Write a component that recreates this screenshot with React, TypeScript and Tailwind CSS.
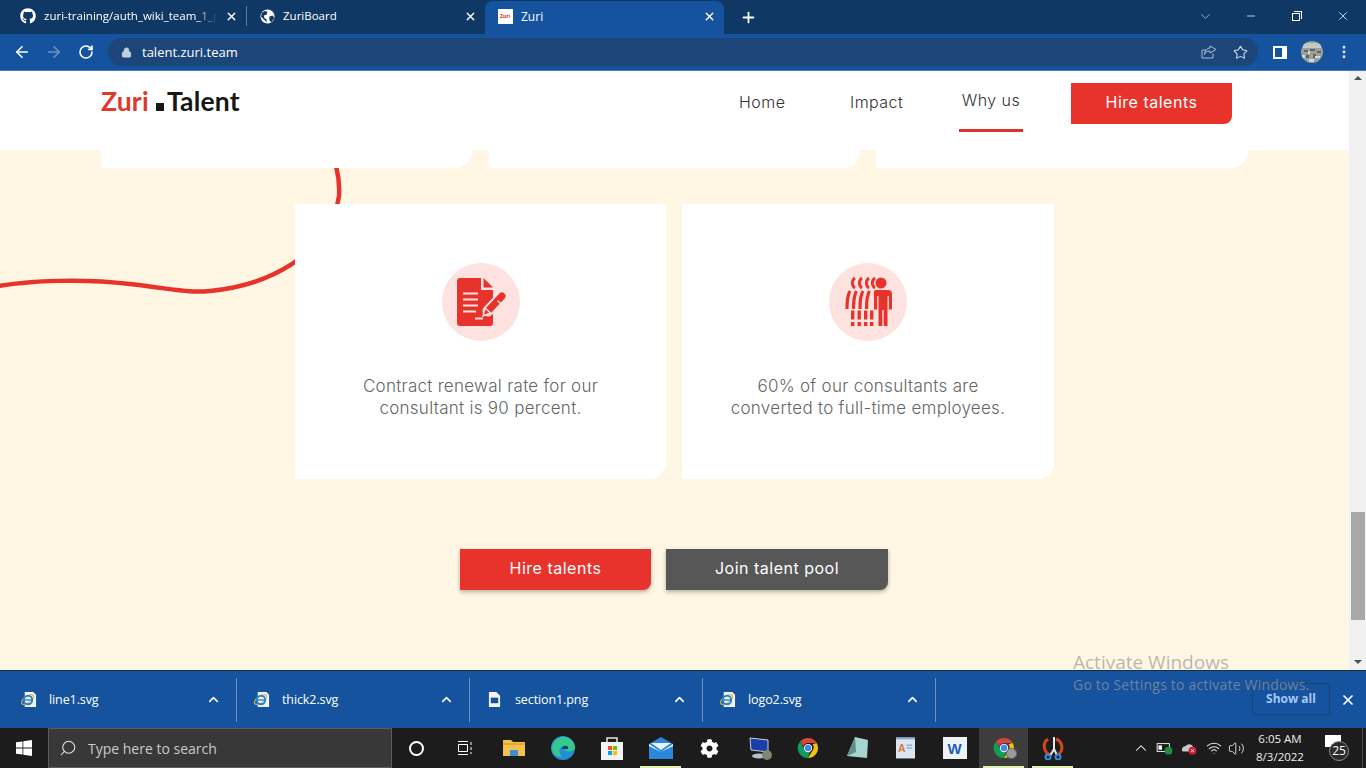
import { FaGithub, FaCog } from 'react-icons/fa'
import { ArrowLeft, ArrowRight, RotateCw, Lock, Star, X, Plus, ChevronDown, ChevronUp, Minus, Search, Wifi, Volume2, MoreVertical } from 'lucide-react'

const ui = "font-['Open_Sans',sans-serif]"
const page = "font-['Inter',sans-serif]"

function Globe() {
  return (
    <svg viewBox="0 0 16 16" className="w-[15px] h-[15px]">
      <circle cx="8" cy="8" r="7.5" fill="#fff" />
      <path d="M2 4l3-2 3 1-1 3-3 1 1 3 2 1v3L4 11 1 8zM10 8l4-1 1 3-3 4-2-2z" fill="#0f3864" />
    </svg>
  )
}

function ChromeLogo({ size = 22 }: { size?: number }) {
  return (
    <svg viewBox="0 0 24 24" width={size} height={size}>
      <path d="M12 1a11 11 0 0 1 9.5 5.5H12a5.5 5.5 0 0 0-5 3.2L3.4 4.9A11 11 0 0 1 12 1z" fill="#db4437" />
      <path d="M21.5 6.500A11 11 0 0 1 12 23l4.700-8.100A5.500 5.500 0 0 0 17 8z" fill="#f4c20d" />
      <path d="M12 23A11 11 0 0 1 3.400 4.900l4.600 8a5.500 5.500 0 0 0 6 3.500z" fill="#0f9d58" />
      <circle cx="12" cy="12" r="4.500" fill="#fff" />
      <circle cx="12" cy="12" r="3.500" fill="#4285f4" />
    </svg>
  )
}

function Tab({ icon, label, active, fade, width }: { icon: React.ReactNode; label: string; active?: boolean; fade?: boolean; width: string }) {
  return (
    <div className={`relative flex items-center pl-3 pr-[8px] gap-2 shrink-0 ${width} ${active ? 'bg-[#15539e] rounded-t-lg h-[33px] self-end pb-[2px]' : 'h-[30px] mb-[2px]'}`}>
      <span className="w-[16px] flex justify-center shrink-0">{icon}</span>
      <span className={`flex-1 overflow-hidden whitespace-nowrap text-white ${active ? 'text-[12px]' : 'text-[11.5px]'} ${ui} ${fade ? '[mask-image:linear-gradient(to_right,black_88%,transparent)]' : ''}`}>{label}</span>
      <X className="w-[13px] h-[13px] text-white shrink-0" strokeWidth={2.5} />
    </div>
  )
}

function Avatar() {
  return (
    <svg viewBox="0 0 22 22" className="w-[22px] h-[22px]">
      <defs>
        <clipPath id="avatar-clip"><circle cx="11" cy="11" r="11" /></clipPath>
      </defs>
      <g clipPath="url(#avatar-clip)">
        <rect width="22" height="22" fill="#9aa09b" />
        <rect x="2" y="2" width="18" height="5" fill="#c4c8c3" />
        <path d="M3 9h4v2H3zM9 8h5v2H9zM16 10h4v2h-4zM5 14h3v3H5zM12 13h3v4h-3z" fill="#5f6663" />
        <path d="M7 10h2v3H7zM14 15h5v2h-5zM1 14h3v3H1zM8 18h5v3H8z" fill="#d6d9d4" />
      </g>
    </svg>
  )
}

function BrowserChrome() {
  return (
    <div className="shrink-0">
      <div className="h-[34px] bg-[#0f3864] flex items-end pl-[8px] relative">
        <div className="flex items-center h-[34px]">
          <Tab width="w-[238px]" icon={<FaGithub className="text-white w-4 h-4" />} label="zuri-training/auth_wiki_team_1_project" fade />
          <div className="w-px h-5 bg-[#5a7ba5] shrink-0 mb-[2px]" />
          <Tab width="w-[238px]" icon={<Globe />} label="ZuriBoard" />
          <Tab
            active
            width="w-[239px]"
            icon={<span className="w-[15px] h-[15px] bg-white flex items-center justify-center text-[5px] font-bold text-[#c33]">Zuri</span>}
            label="Zuri"
          />
        </div>
        <Plus className="w-[17px] h-[17px] text-white ml-[16px] mb-2" strokeWidth={2.5} />
        <div className="flex-1" />
        <div className="flex items-center h-[32px] self-start">
          <span className="w-[46px] flex justify-center"><ChevronDown className="w-[15px] h-[15px] text-[#c8d4e4]" strokeWidth={1.2} /></span>
          <span className="w-[46px] flex justify-center"><Minus className="w-[12px] h-[12px] text-white" strokeWidth={1.5} /></span>
          <span className="w-[46px] flex justify-center">
            <span className="relative block w-[10px] h-[10px]">
              <span className="absolute left-0 bottom-0 w-[8px] h-[8px] border border-white bg-[#0f3864]" />
              <span className="absolute right-0 top-0 w-[8px] h-[8px] border-t border-r border-white" />
            </span>
          </span>
          <span className="w-[46px] flex justify-center"><X className="w-[14px] h-[14px] text-white" strokeWidth={1.3} /></span>
        </div>
      </div>
      <div className="h-[37px] bg-[#15539e] flex items-center pl-[13px] border-b border-[#4a7ab5]">
        <ArrowLeft className="w-[18px] h-[18px] text-white" strokeWidth={2.2} />
        <ArrowRight className="w-[18px] h-[18px] text-[#6e94c5] ml-[14px]" strokeWidth={2.2} />
        <RotateCw className="w-[16px] h-[16px] text-white ml-[15px]" strokeWidth={2.4} />
        <div className="ml-[14px] w-[1150px] h-[28px] rounded-full bg-[#1c4679] flex items-center pl-[13px] pr-[10px]">
          <Lock className="w-[11px] h-[11px] text-[#c2cedd]" fill="#c2cedd" />
          <span className={`ml-[10px] mt-[1px] text-[13px] text-white ${ui}`}>talent.zuri.team</span>
          <div className="flex-1" />
          <svg viewBox="0 0 16 16" className="w-[16px] h-[16px] mr-[16px]" fill="none" stroke="#a9bcd4" strokeWidth="1">
            <path d="M12 9.500V14H1V6h4M9 2l6 3.500L9 9V7C6 7 4.500 8 3.500 10.500 3.500 7 6 4 9 4z" />
          </svg>
          <Star className="w-[15px] h-[15px] text-[#d5deea]" strokeWidth={1.7} />
        </div>
        <div className="ml-[15px] w-[14px] h-[13px] bg-white flex items-center pl-[2px]"><span className="block w-[7px] h-[9px] bg-[#15539e]" /></div>
        <div className="ml-[14px]"><Avatar /></div>
        <MoreVertical className="ml-[13px] w-[16px] h-[16px] text-[#dfe6f0]" strokeWidth={2.4} />
      </div>
    </div>
  )
}

// both feature icons are drawn in the 78px space of the pink circle
function FormIcon() {
  return (
    <svg viewBox="0 0 78 78" className="w-[78px] h-[78px]">
      <path d="M15 18a3 3 0 0 1 3-3h21v12h12v33a3 3 0 0 1-3 3H18a3 3 0 0 1-3-3z" fill="#e7332b" />
      <path d="M41.500 15L51 24.500h-9.500z" fill="#e7332b" />
      <path d="M21 30.500h15M21 36.500h15M21 42.500h15M21 48.500h13M33 55.500h8" stroke="#fde2e0" strokeWidth="2" />
      <path d="M46 48L60 33" stroke="#fde2e0" strokeWidth="11" strokeLinecap="round" />
      <path d="M46 48L60 33" stroke="#e7332b" strokeWidth="7" strokeLinecap="round" />
      <path d="M41 53l2-8 5.500 5z" fill="#e7332b" stroke="#fde2e0" strokeWidth="1.500" />
      <path d="M55.500 37.500l4 4" stroke="#fde2e0" strokeWidth="1.500" />
    </svg>
  )
}

function PeopleIcon() {
  const heads = [24, 31, 38, 44]
  const arcs = [17, 23.5, 30, 36.5]
  const legs = [23.5, 30, 36.5, 42.5]
  return (
    <svg viewBox="0 0 78 78" className="w-[78px] h-[78px]">
      {heads.map((x) => (
        <path key={x} d={`M${x + 2} 15a6 6 0 0 0 0 10`} fill="none" stroke="#e7332b" strokeWidth="2.800" />
      ))}
      {arcs.map((x) => (
        <path key={x} d={`M${x + 4} 28c-2.500 4-3 10-3 18`} fill="none" stroke="#e7332b" strokeWidth="3.200" />
      ))}
      {legs.map((x) => (
        <g key={x} fill="#e7332b">
          <rect x={x - 1.500} y="47.500" width="3.400" height="9" />
          <rect x={x - 1.500} y="59" width="3.400" height="4" />
        </g>
      ))}
      <circle cx="52" cy="20" r="5.500" fill="#e7332b" />
      <path d="M46 27h13a4 4 0 0 1 4 4v15.500h-3.200V33h-1.300v30h-3.800V47h-1.400v16h-3.800V33h-1.300v13.500H45V31a4 4 0 0 1 1-4z" fill="#e7332b" />
    </svg>
  )
}

function InfoCard({ icon, children }: { icon: React.ReactNode; children: React.ReactNode }) {
  return (
    <div className="relative bg-white h-[275px] rounded-br-[16px] pt-[59px] flex flex-col items-center">
      <div className="w-[78px] h-[78px] rounded-full bg-[#fde2e0]">{icon}</div>
      <p className={`mt-[34px] text-center text-[17px] leading-[22px] tracking-[0.28px] font-light text-[#666666] ${page}`}>{children}</p>
    </div>
  )
}

function ZuriPage() {
  return (
    <div className="relative flex-1 bg-[#fff7e4] overflow-hidden flex flex-col">
      <header className="h-[79px] bg-white shrink-0 flex items-start pl-[101px] relative z-10">
        <div className="mt-[14px] w-[139px] flex items-baseline font-['Lato',sans-serif] text-[26.5px] leading-[32px] font-bold tracking-[0.2px] text-[#171717]">
          <span className="text-[#df3a30]">Zuri</span>
          <span className="inline-block w-[8px] h-[8px] bg-[#171717] ml-[7px] mr-[3px]" />
          <span>Talent</span>
        </div>
        <nav className={`ml-[499px] flex items-start text-[#333333] text-[16px] font-light tracking-[0.45px] ${page}`}>
          <a className="mt-[22px] w-[45px] leading-[18px]">Home</a>
          <a className="mt-[22px] ml-[66px] w-[53px] leading-[18px]">Impact</a>
          <a className="ml-[56px] w-[64px] h-[61px] pt-[20px] leading-[18px] text-center border-b-[3px] border-[#d9342b]">Why us</a>
          <button className="ml-[48px] mt-[12px] w-[161px] h-[41px] pb-[3px] bg-[#e7332b] rounded-br-lg font-normal text-white text-[16px] tracking-[0.5px]">Hire talents</button>
        </nav>
      </header>

      <svg viewBox="0 0 345 140" className="absolute left-0 top-[95px] w-[345px] h-[140px]" fill="none">
        <path d="M-2 120C30 115 80 112 130 118S190 127 210 125C265 120 330 90 339 30 340 15 338 8 336 0" stroke="#e7332b" strokeWidth="4.500" />
      </svg>

      <div className="relative grid grid-cols-[371px_371px_372px] gap-[16.5px] w-[1147px] mx-auto">
        {[0, 1, 2].map((i) => (
          <div key={i} className="h-[18px] bg-white rounded-br-[16px]" />
        ))}
      </div>

      <div className="relative grid grid-cols-[371px_372px] gap-4 w-[759px] mx-auto mt-[36px]">
        <InfoCard icon={<FormIcon />}>
          Contract renewal rate for our
          <br />
          consultant is 90 percent.
        </InfoCard>
        <InfoCard icon={<PeopleIcon />}>
          60% of our consultants are
          <br />
          converted to full-time employees.
        </InfoCard>
      </div>

      <div className={`relative flex justify-center gap-[15px] mt-[70px] pr-[1px] text-white text-[16px] tracking-[0.5px] ${page}`}>
        <button className="w-[191px] h-[41px] pb-[3px] bg-[#e7332b] rounded-br-lg shadow-[0_2px_4px_rgba(0,0,0,0.3)]">Hire talents</button>
        <button className="w-[222px] h-[41px] pb-[3px] bg-[#575757] rounded-br-lg shadow-[0_2px_4px_rgba(0,0,0,0.3)]">Join talent pool</button>
      </div>
    </div>
  )
}

function Scrollbar() {
  return (
    <div className="w-[17px] bg-[#f1f1f1] shrink-0 flex flex-col items-center relative">
      <span className="mt-[5px] w-0 h-0 border-x-[4px] border-x-transparent border-b-[4px] border-b-[#505050]" />
      <div className="mt-[432px] w-[14px] h-[108px] bg-[#a8a8a8]" />
      <div className="flex-1" />
      <span className="mb-[6px] w-0 h-0 border-x-[4px] border-x-transparent border-t-[4px] border-t-[#505050]" />
    </div>
  )
}

function FileIE() {
  return (
    <svg viewBox="0 0 18 18" className="w-[17px] h-[17px] shrink-0">
      <path d="M5 1h9l3 3v13H5z" fill="#f3f3f3" />
      <ellipse cx="8" cy="9" rx="7.500" ry="3.500" transform="rotate(-35 8 9)" fill="none" stroke="#e8b23a" strokeWidth="1.200" />
      <circle cx="8.500" cy="9.500" r="4.500" fill="none" stroke="#2383d4" strokeWidth="2" />
      <path d="M4.500 9.500h8" stroke="#2383d4" strokeWidth="1.500" />
    </svg>
  )
}

function FileImg() {
  return (
    <svg viewBox="0 0 14 18" className="w-[13px] h-[17px] shrink-0">
      <path d="M1 1h8l4 4v12H1z" fill="#f3f3f3" />
      <rect x="3" y="7" width="8" height="6" fill="#1b4f8f" />
    </svg>
  )
}

function DownloadItem({ name, icon }: { name: string; icon: React.ReactNode }) {
  return (
    <div className="w-[233px] h-[44px] shrink-0 flex items-center pl-[15px] pr-[15px] border-r border-[#6a90bf] first:w-[237px] first:pl-[19px]">
      <span className="w-[18px] flex justify-center">{icon}</span>
      <span className={`ml-[12px] mt-[2px] flex-1 text-[12.5px] tracking-[-0.1px] text-white ${ui}`}>{name}</span>
      <ChevronUp className="w-[15px] h-[15px] text-white" strokeWidth={2.5} />
    </div>
  )
}

function DownloadBar() {
  return (
    <div className="h-[58px] bg-[#15539e] border-t border-[#1b2a3c] shrink-0 flex items-center">
      <DownloadItem name="line1.svg" icon={<FileIE />} />
      <DownloadItem name="thick2.svg" icon={<FileIE />} />
      <DownloadItem name="section1.png" icon={<FileImg />} />
      <DownloadItem name="logo2.svg" icon={<FileIE />} />
      <div className="flex-1" />
      <button className={`w-[78px] h-[32px] mb-[2px] border border-[#20416d] rounded-[3px] text-[12px] font-bold text-[#a8c7fa] ${ui}`}>Show all</button>
      <X className="ml-[10px] mr-[10px] w-[16px] h-[16px] text-white" strokeWidth={2.6} />
    </div>
  )
}

function Slot({ children, active, running }: { children: React.ReactNode; active?: boolean; running?: boolean }) {
  return (
    <div className={`relative w-[49px] h-full shrink-0 flex items-center justify-center ${active ? 'bg-[#3d3d3d]' : ''}`}>
      {children}
      {running && <span className="absolute bottom-0 left-[4px] right-[4px] h-[2px] bg-[#dff0b0]" />}
    </div>
  )
}

function Taskbar() {
  return (
    <div className="h-[40px] bg-[#1c1c1c] shrink-0 flex items-stretch">
      <div className="w-[48px] flex items-center justify-center">
        <svg viewBox="0 0 16 16" className="w-[16px] h-[16px]" fill="#fff"><path d="M0 2.300l6.500-.9v6.200H0zM7.300 1.300L16 0v7.600H7.300zM0 8.400h6.500v6.200L0 13.700zM7.300 8.400H16V16l-8.700-1.200z" /></svg>
      </div>
      <div className="w-[344px] bg-[#383838] border border-[#5c5c5c] flex items-center pl-[10px]">
        <Search className="w-[18px] h-[18px] text-[#e6e6e6] -scale-x-100" strokeWidth={1.4} />
        <span className={`ml-[11px] text-[14px] text-[#c9c9c9] ${ui}`}>Type here to search</span>
      </div>
      <div className="w-[48px] flex items-center justify-center"><span className="w-[15px] h-[15px] rounded-full border-2 border-white" /></div>
      <div className="w-[49px] flex items-center justify-center">
        <svg viewBox="0 0 16 16" className="w-[16px] h-[16px]" fill="none" stroke="#fff"><path d="M1 1.500h10M1 14.500h10M1.500 4.500h9v7h-9zM14 2v3M14 7v3M14 12v2" /></svg>
      </div>
      <Slot>
        <svg viewBox="0 0 22 18" className="w-[22px] h-[18px]"><path d="M0 1h8l2 2h12v14H0z" fill="#f2c14e" /><rect x="7" y="11" width="8" height="6" fill="#3b8fd6" /><rect y="4" width="22" height="2" fill="#e3a92f" /></svg>
      </Slot>
      <Slot>
        <svg viewBox="0 0 24 24" className="w-[24px] h-[24px]"><circle cx="12" cy="12" r="12" fill="#1f8fd6" /><path d="M1 12C2 4 9 0 14 1c6 1 10 6 10 11-1 3-5 4-9 3-2-1-3-3-2-5-4 0-7 5-2 11C5 21 1 17 1 12z" fill="#38c88f" /><path d="M13 10c3-1 5 1 4 3h-6c0-1 1-3 2-3z" fill="#0c3f73" /></svg>
      </Slot>
      <Slot>
        <svg viewBox="0 0 24 24" className="w-[24px] h-[24px]"><path d="M1 6h22v18H1z" fill="#f3f3f3" /><path d="M7 6V2h10v4" fill="none" stroke="#e5e5e5" strokeWidth="1.500" /><rect x="8" y="10" width="4" height="4" fill="#f25022" /><rect x="13" y="10" width="4" height="4" fill="#7fba00" /><rect x="8" y="15" width="4" height="4" fill="#00a4ef" /><rect x="13" y="15" width="4" height="4" fill="#ffb900" /></svg>
      </Slot>
      <Slot running>
        <svg viewBox="0 0 24 22" className="w-[24px] h-[22px]"><path d="M0 7l12-7 12 7v15H0z" fill="#2b88d8" /><path d="M0 7l12 8 12-8v2l-12 6L0 9z" fill="#fff" /><path d="M2 6h20l-10 7z" fill="#e8f3fb" /></svg>
      </Slot>
      <Slot><FaCog className="w-[19px] h-[19px] text-white" /></Slot>
      <Slot>
        <svg viewBox="0 0 24 24" className="w-[24px] h-[24px] ml-[5px]"><path d="M1 2l18 2v12L2 14z" fill="#1b3fa8" stroke="#c9d1dc" /><ellipse cx="10" cy="20" rx="7" ry="2.500" fill="#b9bfc6" /><circle cx="18" cy="19" r="5" fill="#7a8a70" /></svg>
      </Slot>
      <Slot><ChromeLogo /></Slot>
      <Slot>
        <svg viewBox="0 0 24 24" className="w-[24px] h-[24px] ml-[2px]"><path d="M9 1l13 3-1 18-20-2z" fill="#a8d4cf" /><path d="M9 1L1 20l9-4z" fill="#5f8f8a" /></svg>
      </Slot>
      <Slot>
        <svg viewBox="0 0 20 22" className="w-[19px] h-[22px]"><rect width="20" height="22" fill="#dbe6f2" /><rect width="20" height="2" fill="#8fb0d4" /><text x="2" y="15" fontSize="11" fontWeight="700" fontFamily="Liberation Sans" fill="#d9793a">A</text><path d="M11 8h6M11 11h6" stroke="#5f8fc4" /></svg>
      </Slot>
      <Slot>
        <div className="w-[24px] h-[22px] bg-[#eef3fa] flex items-center justify-center text-[15px] leading-none font-bold text-[#1b5eb8] font-['Liberation_Sans',sans-serif]">W</div>
      </Slot>
      <Slot active running>
        <ChromeLogo />
        <span className="absolute left-[27px] top-[20px] w-[11px] h-[11px] rounded-full bg-[#9a9a9a] border border-[#6a6a6a]" />
      </Slot>
      <Slot running>
        <svg viewBox="0 0 22 24" className="w-[22px] h-[24px]" fill="none"><path d="M6 3a9 9 0 0 0 3 16M14 3a9 9 0 0 1 3 15" stroke="#d8431f" strokeWidth="3" /><path d="M12 1v12L8 20M12 13l3 6" stroke="#e8e8e8" strokeWidth="2" /><circle cx="6" cy="21" r="2.500" stroke="#2f8fe0" strokeWidth="2" /><circle cx="16" cy="21" r="2.500" stroke="#2f8fe0" strokeWidth="2" /></svg>
      </Slot>
      <div className="flex-1" />
      <div className="flex items-center">
        <ChevronUp className="w-[18px] h-[18px] text-white mr-[6px]" strokeWidth={1.4} />
        <svg viewBox="0 0 20 16" className="w-[18px] h-[14px] mr-[5px]"><rect x="1" y="3" width="14" height="9" fill="none" stroke="#fff" /><rect x="2.500" y="5" width="4" height="5" fill="#fff" /><circle cx="14" cy="11" r="4.500" fill="#1e8e3e" /></svg>
        <svg viewBox="0 0 20 16" className="w-[20px] h-[14px] mr-[7px]"><path d="M2 11a4 4 0 0 1 4-5 5 5 0 0 1 9 1v5H3z" fill="#c9c9c9" /><circle cx="14" cy="11" r="4.500" fill="#d3203a" /><path d="M12.500 9.500l3 3M15.500 9.500l-3 3" stroke="#fff" /></svg>
        <Wifi className="w-[16px] h-[16px] text-[#e6e6e6] mr-[6px]" strokeWidth={1.6} />
        <Volume2 className="w-[17px] h-[17px] text-[#e6e6e6]" strokeWidth={1.3} />
        <div className={`w-[70px] text-center text-[11.5px] leading-[18px] text-[#eeeeee] ${ui}`}>
          <div>6:05 AM</div>
          <div>8/3/2022</div>
        </div>
        <div className="relative w-[28px] h-[28px] ml-[7px]">
          <span className="absolute left-[3px] top-[1px] w-[16px] h-[12px] bg-white" />
          <span className={`absolute left-[7px] top-[7px] w-[20px] h-[20px] rounded-full bg-[#2a2a2a] border border-[#8a8a8a] text-[12px] leading-[18px] text-center text-white ${ui}`}>25</span>
        </div>
        <span className="ml-[12px] mr-[3px] w-px h-full bg-[#4a4a4a]" />
      </div>
    </div>
  )
}

export default function App() {
  return (
    <div className="relative w-[1366px] h-[768px] flex flex-col overflow-hidden">
      <BrowserChrome />
      <div className="flex-1 flex min-h-0">
        <ZuriPage />
        <Scrollbar />
      </div>
      <DownloadBar />
      <Taskbar />
      {/* watermark lies over the page and the download bar */}
      <div className={`absolute left-[1073px] top-[650px] text-[#9a9a9a]/70 pointer-events-none ${ui}`}>
        <div className="text-[19px] leading-[24px]">Activate Windows</div>
        <div className="text-[14px] leading-[22px] tracking-[0.2px] whitespace-nowrap">Go to Settings to activate Windows.</div>
      </div>
    </div>
  )
}
